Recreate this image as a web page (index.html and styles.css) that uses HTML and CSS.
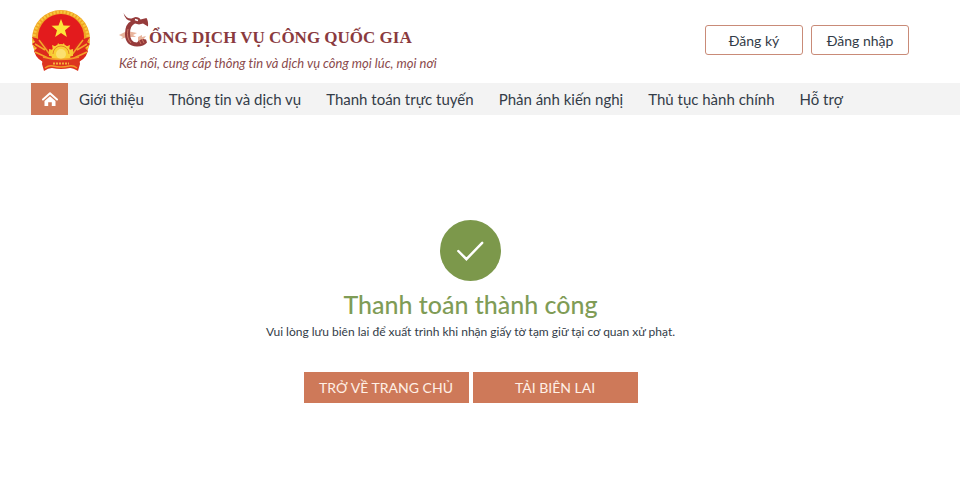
FILE: index.html
```html
<!DOCTYPE html>
<html lang="vi">
<head>
<meta charset="utf-8">
<meta name="viewport" content="width=device-width, initial-scale=1">
<title>Cổng Dịch vụ công Quốc gia</title>
<link rel="stylesheet" href="styles.css">
</head>
<body>
<header class="header">
  <div class="brand">
    <svg class="emblem" viewBox="0 0 60 62" aria-hidden="true">
      <circle cx="30" cy="29" r="29" fill="#f0a323"/>
      <circle cx="30" cy="29" r="27" fill="none" stroke="#f8c840" stroke-width="3" stroke-dasharray="2 1.5"/>
      <circle cx="30" cy="27" r="23" fill="#e31b1d"/>
      <path d="M30 9l2.500 6.500 7 .3-5.500 4.400 1.900 6.800-5.900-3.900-5.900 3.900 1.900-6.800-5.500-4.400 7-.3z" fill="#fde53a"/>
      <path d="M1 27q8 1 14 8l8 12-7 6q-10-2-13-12l3-3-5-4 3-2zM59 27q-8 1-14 8l-8 12 7 6q10-2 13-12l-3-3 5-4-3-2z" fill="#dc291d"/>
      <path d="M4 34l10 6M4 42l13 6M8 30l12 16M56 34l-10 6M56 42l-13 6M52 30L40 46" stroke="#f4a52a" stroke-width="1.500" fill="none"/>
      <path d="M18 46v-7l4 1-1-5 5 2 1-4 3 3 3-3 1 4 5-2-1 5 4-1v7z" fill="#f7c832"/>
      <circle cx="30" cy="44" r="10" fill="#f9cf36"/>
      <circle cx="30" cy="44" r="5" fill="#fbe070"/>
      <path d="M22 44a8 8 0 0 1 16 0" fill="none" stroke="#e58425"/>
      <path d="M12 47q18 5 36 0l1 7-2 7q-5-3-8-3-9 2-18 0-4 0-8 3l-2-7z" fill="#dd3520"/>
      <path d="M12 47q18 5 36 0M14 58q4-3 8-2 8 2 16 0 4-1 8 2" fill="none" stroke="#f49a28" stroke-width="1.500"/>
      <path d="M22 53.500h16" stroke="#f6b13a" stroke-width="2" stroke-dasharray="2 1"/>
    </svg>
    <div class="brand-text">
      <div class="brand-name">
        <svg class="dragon" viewBox="0 0 30 36" aria-hidden="true">
          <path d="M0 23l8-4 10 2-4 2 3 2-9 0-6 2 2-2zM19 25l4-2v2l4-1-3 4-5 1z" fill="#e8b49c"/>
          <path d="M4.500 1q3 6 8 5.500l4-1.500q4 0 5 2.500l6-1.500q2 3 1.500 8.500l-5-3-4 1-4-1q-5 2-5 10 0 9 7 9 4-5 9-3l1 3q-3 4-10 4Q6 34 6 22 6 12 12 9 6 8 4.500 1z" fill="#963b3b"/>
          <path d="M9 17q-2 9 3 14M20 28l2 4M23 27l2 4" stroke="#d07a66" fill="none"/>
          <path d="M16 7.500l3 1" stroke="#fff" stroke-width="1.500"/>
        </svg>
        <span class="brand-title">ỔNG DỊCH VỤ CÔNG QUỐC GIA</span>
      </div>
      <div class="tagline">Kết nối, cung cấp thông tin và dịch vụ công mọi lúc, mọi nơi</div>
    </div>
  </div>
  <div class="account">
    <button class="btn-outline" type="button">Đăng ký</button>
    <button class="btn-outline" type="button">Đăng nhập</button>
  </div>
</header>
<nav class="nav">
  <a class="home" href="#" aria-label="Trang chủ">
    <svg viewBox="0 0 16 14" aria-hidden="true">
      <path d="M1 7.500L8 1.300l7 6.200" fill="none" stroke="#fff" stroke-width="2" stroke-linecap="round" stroke-linejoin="round"/>
      <path d="M8 4.200l5.500 4.900V14H9.800v-3.800H6.200V14H2.500V9.100z" fill="#fff"/>
    </svg>
  </a>
  <a class="link" href="#">Giới thiệu</a>
  <a class="link" href="#">Thông tin và dịch vụ</a>
  <a class="link" href="#">Thanh toán trực tuyến</a>
  <a class="link" href="#">Phản ánh kiến nghị</a>
  <a class="link" href="#">Thủ tục hành chính</a>
  <a class="link" href="#">Hỗ trợ</a>
</nav>
<main class="result">
  <svg class="check" viewBox="0 0 60 60" aria-hidden="true">
    <circle cx="30" cy="30" r="30" fill="#7c984b"/>
    <path d="M18 30.500l8 8L41.500 22.500" fill="none" stroke="#fff" stroke-width="2.400" stroke-linecap="round"/>
  </svg>
  <h1 class="title">Thanh toán thành công</h1>
  <p class="note">Vui lòng lưu biên lai để xuất trình khi nhận giấy tờ tạm giữ tại cơ quan xử phạt.</p>
  <div class="actions">
    <button class="btn-fill" type="button">TRỞ VỀ TRANG CHỦ</button>
    <button class="btn-fill" type="button">TẢI BIÊN LAI</button>
  </div>
</main>
</body>
</html>
```
FILE: styles.css
```css
* { box-sizing: border-box; }
body {
  margin: 0;
  background: #fff;
  color: #333c48;
  font-family: Lato, "Open Sans", sans-serif;
  font-variant-ligatures: none;
}
button { font-family: inherit; color: inherit; padding: 0; cursor: pointer; }
a { color: inherit; text-decoration: none; }

.header {
  display: flex;
  justify-content: space-between;
  align-items: flex-start;
  padding: 10px 51px 11px 31px;
}
.brand { display: flex; gap: 28px; }
.emblem { display: block; width: 60px; height: 62px; }
.brand-text { padding-top: 2px; }
.brand-name { display: flex; align-items: flex-end; height: 36px; }
.dragon { width: 30px; height: 36px; }
.brand-title {
  color: #8a3a3e;
  font: bold 17px/20px "Liberation Serif", serif;
}
.tagline {
  margin-top: 6px;
  color: #8a4a4c;
  font-size: 13px;
  line-height: 18px;
  font-style: italic;
}
.account { display: flex; gap: 8px; padding-top: 15px; }
.btn-outline {
  width: 98px;
  height: 30px;
  border: 1px solid #c98b78;
  border-radius: 3px;
  background: #fff;
  font-size: 14px;
}

.nav {
  display: flex;
  align-items: center;
  gap: 25px;
  padding: 0 51px 0 31px;
  background: #f3f3f3;
  font-size: 15px;
  line-height: 32px;
}
.home {
  display: grid;
  place-items: center;
  width: 37px;
  height: 32px;
  margin-right: -14px;
  background: #d07a58;
}
.home svg { width: 16px; height: 14px; }
.link { white-space: nowrap; }

.result {
  display: flex;
  flex-direction: column;
  align-items: center;
  padding: 105px 19px 40px 0;
}
.check { width: 61px; height: 61px; }
.title {
  margin: 7px 0 0;
  color: #7f9c56;
  font-size: 25px;
  font-weight: 500;
  line-height: 32px;
}
.note { margin: 2px 0 0; font-size: 12px; line-height: 20px; }
.actions { display: flex; gap: 4px; margin-top: 30px; }
.btn-fill {
  width: 165px;
  height: 31px;
  border: 0;
  background: #ce7959;
  color: #fff0e6;
  font-size: 14px;
}
```
